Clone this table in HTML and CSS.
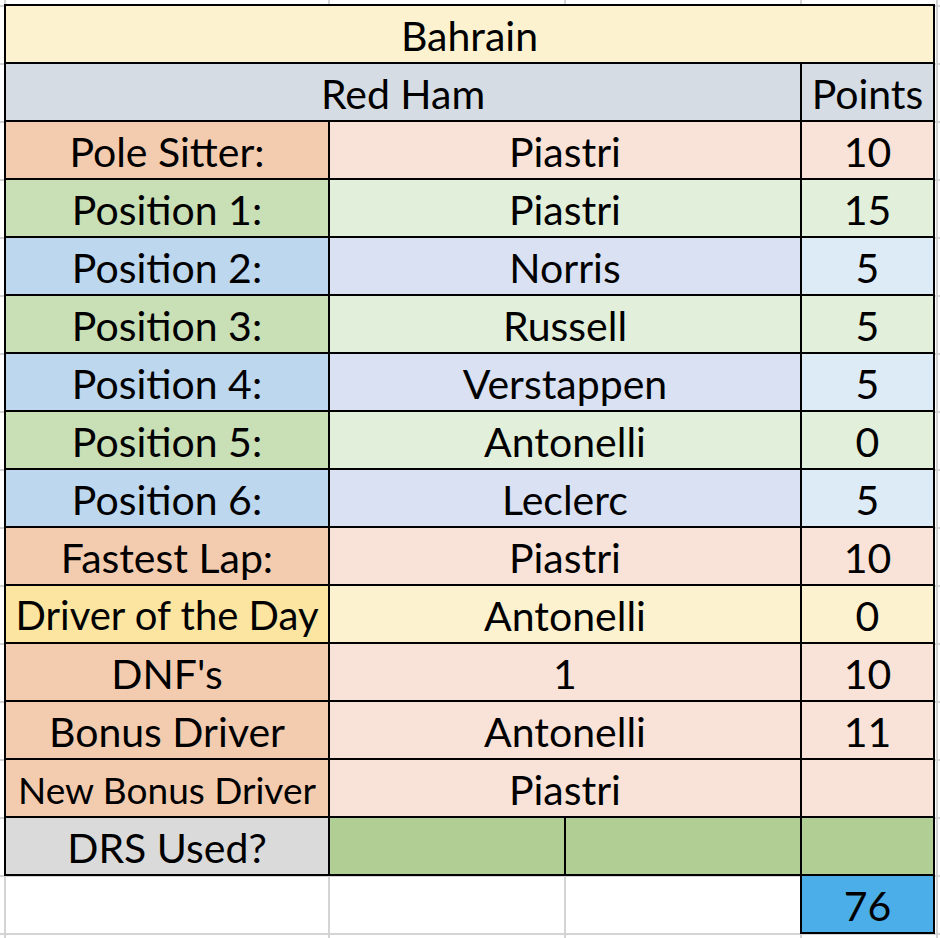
FILE: index.html
```html
<!DOCTYPE html>
<html lang="en">
<head>
<meta charset="utf-8">
<title>Bahrain - Red Ham</title>
<link rel="stylesheet" href="styles.css">
</head>
<body>
<div class="sheet">
  <div class="grid">
    <div class="c title span4">Bahrain</div>
    <div class="c team span3">Red Ham</div>
    <div class="c team">Points</div>

    <div class="c peach-l">Pole Sitter:</div>
    <div class="c peach-v span2">Piastri</div>
    <div class="c peach-v">10</div>

    <div class="c green-l">Position 1:</div>
    <div class="c green-v span2">Piastri</div>
    <div class="c green-v">15</div>

    <div class="c blue-l">Position 2:</div>
    <div class="c blue-v span2">Norris</div>
    <div class="c blue-p">5</div>

    <div class="c green-l">Position 3:</div>
    <div class="c green-v span2">Russell</div>
    <div class="c green-v">5</div>

    <div class="c blue-l">Position 4:</div>
    <div class="c blue-v span2">Verstappen</div>
    <div class="c blue-p">5</div>

    <div class="c green-l">Position 5:</div>
    <div class="c green-v span2">Antonelli</div>
    <div class="c green-v">0</div>

    <div class="c blue-l">Position 6:</div>
    <div class="c blue-v span2">Leclerc</div>
    <div class="c blue-p">5</div>

    <div class="c peach-l">Fastest Lap:</div>
    <div class="c peach-v span2">Piastri</div>
    <div class="c peach-v">10</div>

    <div class="c yellow-l tight">Driver of the Day</div>
    <div class="c yellow-v span2">Antonelli</div>
    <div class="c yellow-v">0</div>

    <div class="c peach-l">DNF's</div>
    <div class="c peach-v span2">1</div>
    <div class="c peach-v">10</div>

    <div class="c peach-l">Bonus Driver</div>
    <div class="c peach-v span2">Antonelli</div>
    <div class="c peach-v">11</div>

    <div class="c peach-l small">New Bonus Driver</div>
    <div class="c peach-v span2">Piastri</div>
    <div class="c peach-v"></div>

    <div class="c gray-l">DRS Used?</div>
    <div class="c drs"></div>
    <div class="c drs"></div>
    <div class="c drs"></div>
  </div>
  <div class="total-row">
    <div class="total">76</div>
  </div>
</div>
</body>
</html>
```

FILE: styles.css
```css
html, body {
  margin: 0;
  padding: 0;
}

body {
  padding: 4px;
  min-height: 938px;
  box-sizing: border-box;
  background-color: #ffffff;
  background-image:
    linear-gradient(#d4d4d4, #d4d4d4),
    linear-gradient(#d4d4d4, #d4d4d4),
    linear-gradient(#d4d4d4, #d4d4d4),
    linear-gradient(#d4d4d4, #d4d4d4),
    linear-gradient(#d4d4d4, #d4d4d4),
    linear-gradient(to bottom, #d4d4d4 0, #d4d4d4 2px, transparent 2px);
  background-size: 2px 100%, 2px 100%, 2px 100%, 2px 100%, 2px 100%, 100% 58px;
  background-position: 4px 0, 328px 0, 564px 0, 800px 0, 936px 0, 0 5px;
  background-repeat: no-repeat, no-repeat, no-repeat, no-repeat, no-repeat, repeat-y;
  font-family: "Lato", "Open Sans", sans-serif;
  color: #000;
}

.sheet {
  width: 931px;
}

.grid {
  display: grid;
  grid-template-columns: 322px 234px 234px 131px;
  grid-auto-rows: 56px;
  gap: 2px;
  padding: 2px;
  background: #000;
}

.c {
  display: flex;
  align-items: center;
  justify-content: center;
  font-size: 41px;
  line-height: 1;
  padding-top: 2px;
  white-space: nowrap;
  overflow: hidden;
}

.span4 { grid-column: span 4; }
.span3 { grid-column: span 3; }
.span2 { grid-column: span 2; }

.small { font-size: 37px; }
.tight { font-size: 40px; }

.title { background: #fcf2cf; }
.team { background: #d6dce4; }

.peach-l { background: #f3ccaf; }
.peach-v { background: #f9e3d8; }
.green-l { background: #c9dfb6; }
.green-v { background: #e2efda; }
.blue-l { background: #bdd7ee; }
.blue-v { background: #d9e1f2; }
.blue-p { background: #ddebf7; }
.yellow-l { background: #fce5a0; }
.yellow-v { background: #fdf2cf; }
.gray-l { background: #dadada; }
.drs { background: #b1cf95; }

.total-row {
  display: flex;
  justify-content: flex-end;
  margin-top: -2px;
}

.total {
  box-sizing: border-box;
  width: 135px;
  height: 60px;
  border: 2px solid #000;
  background: #4baee8;
  display: flex;
  align-items: center;
  justify-content: center;
  font-size: 41px;
  line-height: 1;
  padding-top: 2px;
}
```
